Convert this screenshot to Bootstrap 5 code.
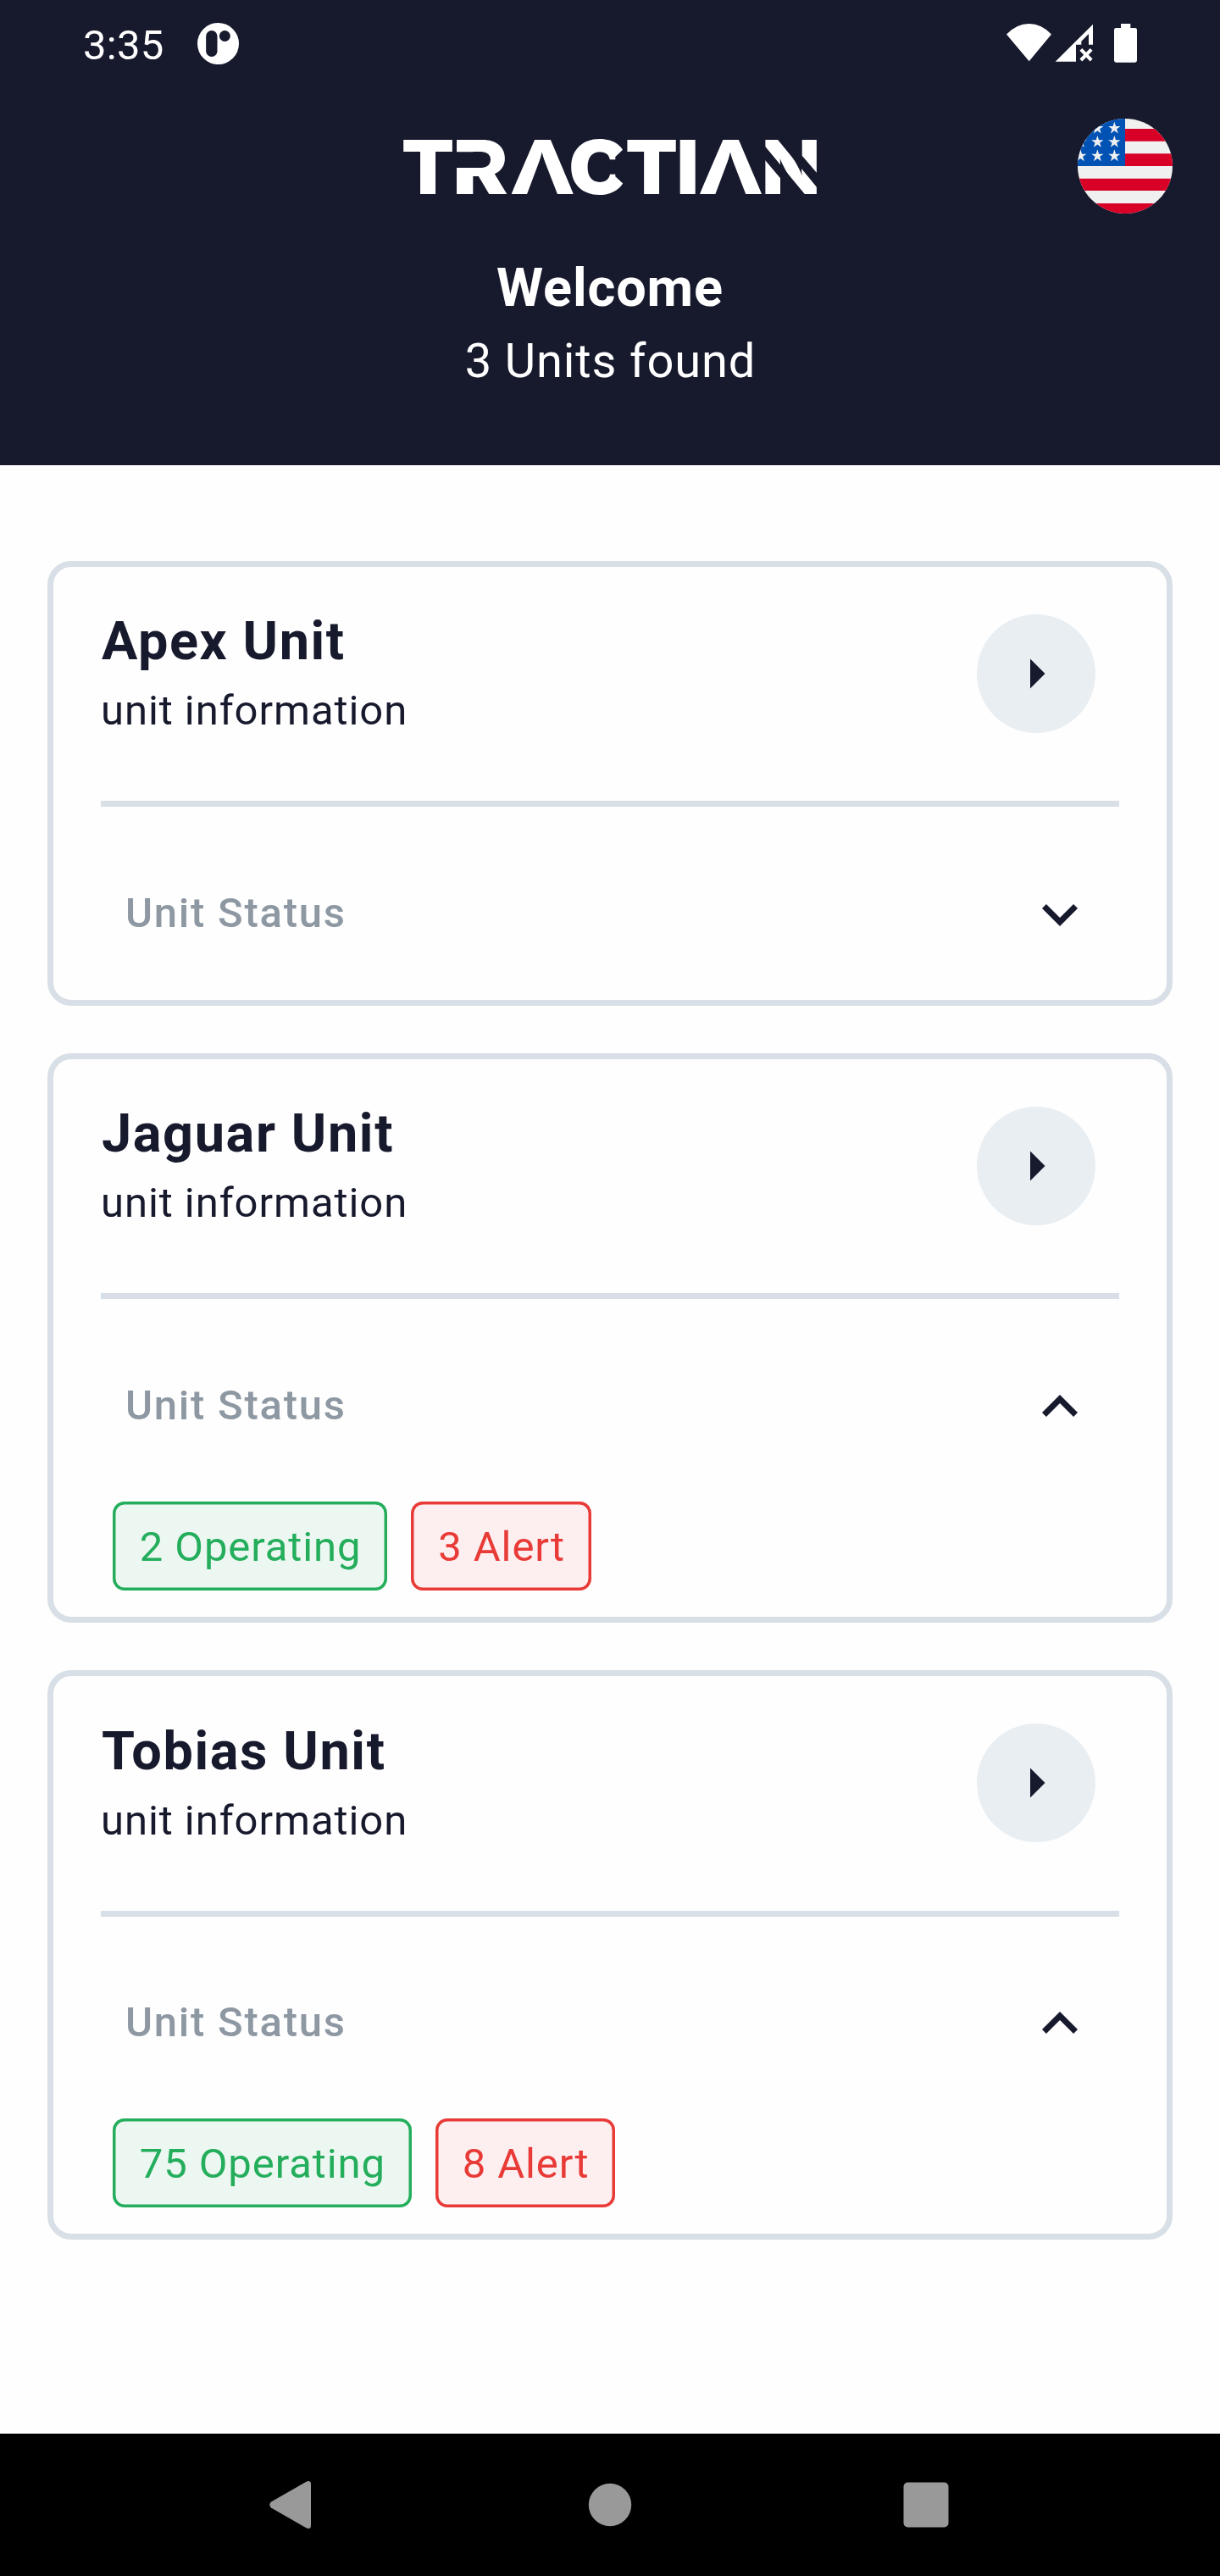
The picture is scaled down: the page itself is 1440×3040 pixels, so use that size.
<!DOCTYPE html>
<html lang="en">
<head>
<meta charset="utf-8">
<meta name="viewport" content="width=device-width, initial-scale=1">
<title>Tractian Units</title>
<link href="https://cdn.jsdelivr.net/npm/bootstrap@5.3.0/dist/css/bootstrap.min.css" rel="stylesheet">
<style>
  :root { --navy: #17192d; --line: #d8dfe6; }
  body { font-family: Roboto, "Liberation Sans", sans-serif; color: var(--navy); background: #fefefe; min-height: 3040px; }
  svg { display: block; flex: none; overflow: visible; }
  .app-header { background: var(--navy); color: #fff; height: 549.4px; }
  .status-bar { height: 140px; padding: 12px 93px 0 98px; }
  .clock { font-size: 49px; line-height: 84px; letter-spacing: .3px; width: 134.8px; }
  .brand-row { display: grid; grid-template-columns: 1fr 489px 1fr; height: 112px; padding: 0 56px; }
  .brand-logo { margin-top: 22.7px; }
  .welcome { font-size: 63px; line-height: 88px; letter-spacing: .85px; margin-top: 43.5px; }
  .found { font-size: 56px; line-height: 85px; letter-spacing: .875px; padding-left: 1px; }
  .unit-list { padding: 112.6px 56px 0; gap: 56px; }
  .unit-card { border: 7px solid var(--line); border-radius: 28px; background: #fefefe; padding: 44.5px 56px 58.7px; color: var(--navy); }
  .unit-card.is-open { padding-bottom: 31px; }
  .unit-name { font-size: 63px; line-height: 88px; letter-spacing: 1.6px; padding-left: 1px; }
  .unit-info { font-size: 49px; line-height: 75px; letter-spacing: .93px; }
  .go-btn { width: 140px; height: 140px; background: #e9eef2; margin: 11.5px 28px 0 0; }
  .rule { height: 7px; background: var(--line); margin-top: 69px; }
  .status-row { padding: 84.8px 28px 0 29px; }
  .status-label { font-size: 49px; line-height: 84px; letter-spacing: 1.75px; color: #8e98a3; margin-top: -1.3px; height: 84px; }
  .chips { margin: 69.4px 0 0 14px; gap: 28px; }
  .chip { height: 105.4px; padding: 0 31px 0 31.8px; border-radius: 14px; font-size: 49px; line-height: 108px; letter-spacing: .9px; }
  .chip-ok { color: #24ae5c; background: #edf7f2; box-shadow: inset 0 0 0 3.5px #24ae5c; }
  .chip-alert { color: #e83a36; background: #fdeeef; box-shadow: inset 0 0 0 3.5px #e83a36; }
  .nav-keys { background: #000; height: 168px; }
</style>
<script src="https://cdn.jsdelivr.net/npm/bootstrap@5.3.0/dist/js/bootstrap.bundle.min.js"></script>
</head>
<body class="d-flex flex-column">

<header class="app-header">
  <div class="status-bar d-flex align-items-start">
    <span class="clock">3:35</span>
    <svg width="49" height="49" viewBox="0 0 147 147" style="margin-top:15px">
      <circle cx="73.5" cy="73.5" r="73.5" fill="#fff"/>
      <rect x="30.500" y="27" width="40" height="93" rx="20" fill="#17192d"/>
      <circle cx="97" cy="46.500" r="19.500" fill="#17192d"/>
    </svg>
    <svg class="ms-auto" width="159" height="46" viewBox="84 84 477 138" style="margin-top:16px" fill="#fff">
      <path d="M84 121.500Q120 84 164 84T243 121.500L164 217Z"/>
      <path d="M257 218L390 86V158H375V120L349 146V158H330V218Z"/>
      <path d="M347.500 175L384.500 213M384.500 175L347.500 213" stroke="#fff" stroke-width="12"/>
      <path d="M489 84H523V99H539Q546 99 546 106V214Q546 221 539 221H472Q465 221 465 214V106Q465 99 472 99H489Z"/>
    </svg>
  </div>
  <div class="brand-row">
    <span></span>
    <svg class="brand-logo" width="489" height="68" viewBox="0 0 489 68">
      <text y="66.300" font-family="Inter, sans-serif" font-weight="900" font-size="88" fill="#fff"><tspan x="-2.2" textLength="62.6" lengthAdjust="spacingAndGlyphs">T</tspan><tspan x="58.6" textLength="65" lengthAdjust="spacingAndGlyphs">R</tspan><tspan x="125.4" textLength="77.6" lengthAdjust="spacingAndGlyphs">A</tspan><tspan x="195" textLength="71" lengthAdjust="spacingAndGlyphs">C</tspan><tspan x="261.9" textLength="62.2" lengthAdjust="spacingAndGlyphs">T</tspan><tspan x="322.4" textLength="26.4" lengthAdjust="spacingAndGlyphs">I</tspan><tspan x="347.8" textLength="77.6" lengthAdjust="spacingAndGlyphs">A</tspan><tspan x="423.2" textLength="68.8" lengthAdjust="spacingAndGlyphs">N</tspan></text>
      <!-- stencil cuts over the wordmark -->
      <g fill="#17192d">
        <path d="M61 16.300H93Q103 17 103 25.600Q103 34 93 35H61Z"/>
        <path d="M163.700 19L145.300 68H182.700Z"/>
        <path d="M147 1H155.500L127.300 66.300H124ZM173.500 1H181L203 62L201 66.300Z"/>
        <path d="M250.300 22L262 11H263.500V57H263L250.300 45.300Z"/>
        <path d="M386 19L367.600 68H405Z"/>
        <path d="M369 1H377.800L349.700 66.300H347ZM395.500 1H403L425 62L423.300 66.300Z"/>
        <path d="M426 8.700L427.300 10L474 66.300V68H445V47.300L427.300 26.300H426Z"/>
        <path d="M442.300 2.300V1H470.700V20.700L488.300 41.300H490V58.300H488.300Z"/>
      </g>
    </svg>
    <svg class="ms-auto" width="112" height="112" viewBox="336 420 336 336">
      <defs>
        <clipPath id="round"><circle cx="504" cy="588" r="168"/></clipPath>
        <path id="star" d="M0-23L5.200-7H21.500L8.300 2.500L13.300 18.500L0 8.700L-13.300 18.500L-8.300 2.500L-21.500-7H-5.200Z" fill="#f0f0f0"/>
      </defs>
      <g clip-path="url(#round)">
        <path fill="#f0f0f0" d="M336 420h336v336H336z"/>
        <path fill="#d80027" d="M504 456h168v44.500H504zM504 544h168v44H504zM336 632h336v43H336zM336 720h336v36H336z"/>
        <path fill="#0052b4" d="M336 420h168v168H336z"/>
        <use href="#star" x="406" y="454"/><use href="#star" x="466" y="454"/>
        <use href="#star" x="346" y="503"/><use href="#star" x="406" y="503"/><use href="#star" x="466" y="503"/>
        <use href="#star" x="346" y="552"/><use href="#star" x="406" y="552"/><use href="#star" x="466" y="552"/>
      </g>
    </svg>
  </div>
  <h1 class="welcome fw-bold text-center mb-0">Welcome</h1>
  <p class="found text-center mb-0">3 Units found</p>
</header>

<main class="unit-list d-flex flex-column flex-grow-1">
  <section class="card unit-card">
    <div class="d-flex justify-content-between align-items-start">
      <div>
        <h2 class="unit-name fw-bold mb-0">Apex Unit</h2>
        <p class="unit-info mb-0">unit information</p>
      </div>
      <a href="#" class="go-btn rounded-circle d-flex align-items-center justify-content-center" aria-label="Open Apex Unit"><svg width="84" height="84" viewBox="0 0 24 24" fill="#17192d"><path d="M10 17l5-5-5-5v10z"/></svg></a>
    </div>
    <div class="rule"></div>
    <div class="status-row d-flex justify-content-between">
      <span class="status-label fw-medium">Unit Status</span>
      <svg width="84" height="84" viewBox="0 0 24 24" fill="#17192d"><path d="M16.590 8.590L12 13.170 7.410 8.590 6 10l6 6 6-6z"/></svg>
    </div>
  </section>

  <section class="card unit-card is-open">
    <div class="d-flex justify-content-between align-items-start">
      <div>
        <h2 class="unit-name fw-bold mb-0">Jaguar Unit</h2>
        <p class="unit-info mb-0">unit information</p>
      </div>
      <a href="#" class="go-btn rounded-circle d-flex align-items-center justify-content-center" aria-label="Open Jaguar Unit"><svg width="84" height="84" viewBox="0 0 24 24" fill="#17192d"><path d="M10 17l5-5-5-5v10z"/></svg></a>
    </div>
    <div class="rule"></div>
    <div class="status-row d-flex justify-content-between">
      <span class="status-label fw-medium">Unit Status</span>
      <svg width="84" height="84" viewBox="0 0 24 24" fill="#17192d"><path d="M12 8l-6 6 1.410 1.410L12 10.830l4.590 4.580L18 14z"/></svg>
    </div>
    <div class="chips d-flex">
      <span class="chip chip-ok">2 Operating</span>
      <span class="chip chip-alert">3 Alert</span>
    </div>
  </section>

  <section class="card unit-card is-open">
    <div class="d-flex justify-content-between align-items-start">
      <div>
        <h2 class="unit-name fw-bold mb-0">Tobias Unit</h2>
        <p class="unit-info mb-0">unit information</p>
      </div>
      <a href="#" class="go-btn rounded-circle d-flex align-items-center justify-content-center" aria-label="Open Tobias Unit"><svg width="84" height="84" viewBox="0 0 24 24" fill="#17192d"><path d="M10 17l5-5-5-5v10z"/></svg></a>
    </div>
    <div class="rule"></div>
    <div class="status-row d-flex justify-content-between">
      <span class="status-label fw-medium">Unit Status</span>
      <svg width="84" height="84" viewBox="0 0 24 24" fill="#17192d"><path d="M12 8l-6 6 1.410 1.410L12 10.830l4.590 4.580L18 14z"/></svg>
    </div>
    <div class="chips d-flex">
      <span class="chip chip-ok">75 Operating</span>
      <span class="chip chip-alert">8 Alert</span>
    </div>
  </section>
</main>

<footer class="nav-keys">
  <svg width="1440" height="168" viewBox="0 0 1440 168" fill="#999">
    <path d="M320 80.500L361 57Q367 54 367 60V108Q367 114 361 111L320 87.500Q316.500 84 320 80.500Z"/>
    <circle cx="720" cy="84" r="25.200"/>
    <rect x="1066.500" y="57.500" width="53" height="53" rx="5"/>
  </svg>
</footer>
</body>
</html>
